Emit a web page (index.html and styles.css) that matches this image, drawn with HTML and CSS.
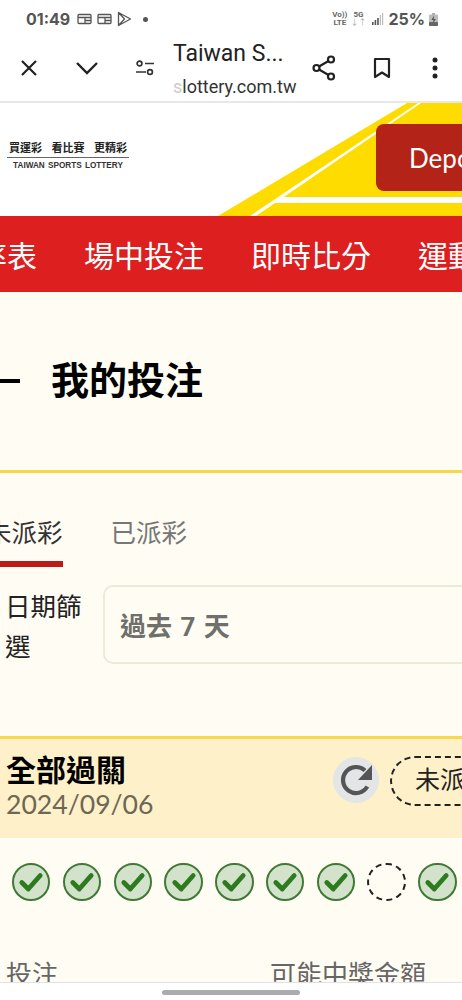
FILE: index.html
```html
<!DOCTYPE html>
<html lang="zh-Hant">

<head>
    <meta charset="UTF-8">
    <meta name="viewport" content="width=device-width, initial-scale=1.0">
    <title>我的投注</title>
    <link rel="stylesheet" href="styles.css">
</head>

<body>
    <div class="phone">
        <!-- Status bar -->
        <div class="status-bar">
            <div class="status-left">
                <span class="clock">01:49</span>
                <svg class="status-icon" width="15" height="12" viewBox="0 0 15 12" fill="none" stroke="#555" stroke-width="1.3"><rect x="1" y="1.5" width="13" height="9" rx="1"/><path d="M1 4.5h13M8 4.5v6M8 7.5h6"/></svg>
                <svg class="status-icon" width="15" height="12" viewBox="0 0 15 12" fill="none" stroke="#555" stroke-width="1.3"><rect x="1" y="1.5" width="13" height="9" rx="1"/><path d="M1 4.5h13M8 4.5v6M8 7.5h6"/></svg>
                <svg class="status-icon" width="15" height="16" viewBox="0 0 15 16" fill="none" stroke="#555" stroke-width="1.3" stroke-linejoin="round"><path d="M1.5 1.5l12 6.5-12 6.5zM1.5 1.5l6 6.5-6 6.5"/></svg>
                <span class="dot"></span>
            </div>
            <div class="status-right">
                <span class="tiny-label">Vo))<br>LTE</span>
                <span class="tiny-label">5G<br><span class="arrows">↓↑</span></span>
                <svg width="12" height="12" viewBox="0 0 12 12" fill="#555"><rect x="0" y="9" width="1.6" height="3"/><rect x="2.6" y="7" width="1.6" height="5"/><rect x="5.2" y="5" width="1.6" height="7"/><rect x="7.8" y="2" width="1.2" height="10" fill="#bbb"/><rect x="10" y="0" width="1.2" height="12" fill="#bbb"/></svg>
                <span class="battery-text">25%</span>
                <svg class="battery" width="9" height="13" viewBox="0 0 9 13"><rect x="3" y="0" width="3" height="2" fill="#aaa"/><rect x="0" y="1.5" width="9" height="11.5" rx="1" fill="#bbb"/><rect x="0" y="9" width="9" height="4" rx="1" fill="#666"/><path d="M5 2.5L2.5 7h2l-.5 3.5L6.8 6H4.8z" fill="#555"/></svg>
            </div>
        </div>

        <!-- Browser toolbar -->
        <div class="toolbar">
            <button class="tool-btn close-btn">
                <svg width="18" height="18" viewBox="0 0 18 18" fill="none" stroke="#222" stroke-width="2.2"><path d="M2 2l14 14M16 2L2 16"/></svg>
            </button>
            <button class="tool-btn chevron-btn">
                <svg width="24" height="14" viewBox="0 0 24 14" fill="none" stroke="#222" stroke-width="2.4"><path d="M2 2l10 10L22 2"/></svg>
            </button>
            <button class="tool-btn tune-btn">
                <svg width="20" height="16" viewBox="0 0 20 16" fill="none" stroke="#333" stroke-width="1.7"><circle cx="4.5" cy="3.5" r="2.4"/><path d="M10 3.5h9M1 12h10"/><circle cx="15" cy="12" r="2.4"/></svg>
            </button>
            <div class="page-info">
                <div class="page-title">Taiwan S...</div>
                <div class="page-url"><span class="url-fade">s</span>lottery.com.tw</div>
            </div>
            <button class="tool-btn share-btn">
                <svg width="24" height="26" viewBox="0 0 24 26" fill="none" stroke="#222" stroke-width="2.2"><circle cx="19" cy="4.5" r="3"/><circle cx="4.5" cy="13" r="3"/><circle cx="19" cy="21.5" r="3"/><path d="M7 11.5l9.5-5.5M7 14.5l9.5 5.5"/></svg>
            </button>
            <button class="tool-btn bookmark-btn">
                <svg width="18" height="22" viewBox="0 0 18 22" fill="none" stroke="#222" stroke-width="2.2" stroke-linejoin="round"><path d="M2 2h14v18l-7-4.5L2 20z"/></svg>
            </button>
            <button class="tool-btn more-btn">
                <svg width="6" height="22" viewBox="0 0 6 22" fill="#222"><circle cx="3" cy="3" r="2.5"/><circle cx="3" cy="11" r="2.5"/><circle cx="3" cy="19" r="2.5"/></svg>
            </button>
        </div>

        <!-- Site header -->
        <header class="site-header">
            <div class="logo">
                <div class="logo-slogan"><span>買運彩</span><span>看比賽</span><span>更精彩</span></div>
                <div class="logo-name">TAIWAN SPORTS LOTTERY</div>
            </div>
            <svg class="header-art" width="252" height="113" viewBox="0 0 252 113">
                <path d="M8 113L197 0H252V113z" fill="#ffdc00"/>
                <path d="M40 113L208 0h3L46 113z" fill="#fff"/>
                <path d="M73 94H252V100H63z" fill="#fff"/>
            </svg>
            <button class="deposit-btn">Deposit</button>
        </header>

        <!-- Red nav -->
        <nav class="main-nav">
            <a>賠率表</a>
            <a>場中投注</a>
            <a>即時比分</a>
            <a>運動賽事</a>
        </nav>

        <main class="content">
            <div class="page-heading">
                <span class="heading-bar"></span>
                <h1>我的投注</h1>
            </div>

            <div class="tabs">
                <a class="tab active">未派彩</a>
                <a class="tab">已派彩</a>
            </div>

            <div class="date-filter">
                <label>日期篩選</label>
                <div class="date-select">過去 7 天</div>
            </div>

            <section class="bet-card">
                <div class="bet-head">
                    <div class="bet-name">
                        <div class="bet-type">全部過關</div>
                        <div class="bet-date">2024/09/06</div>
                    </div>
                    <div class="refresh">
                        <svg width="36" height="36" viewBox="0 0 36 36" fill="none"><path d="M29.3 24.5A13 13 0 1 1 27 8.6" stroke="#555" stroke-width="4.2"/><path d="M34 3v15H20z" fill="#555"/></svg>
                    </div>
                    <div class="status-pill">未派彩</div>
                </div>

                <div class="legs">
                    <span class="leg"><svg width="26" height="22" viewBox="0 0 24 20" fill="none" stroke="#2d7a1f" stroke-width="4.4" stroke-linecap="round" stroke-linejoin="round"><path d="M3.5 10.5l6 6L20.5 4"/></svg></span>
                    <span class="leg"><svg width="26" height="22" viewBox="0 0 24 20" fill="none" stroke="#2d7a1f" stroke-width="4.4" stroke-linecap="round" stroke-linejoin="round"><path d="M3.5 10.5l6 6L20.5 4"/></svg></span>
                    <span class="leg"><svg width="26" height="22" viewBox="0 0 24 20" fill="none" stroke="#2d7a1f" stroke-width="4.4" stroke-linecap="round" stroke-linejoin="round"><path d="M3.5 10.5l6 6L20.5 4"/></svg></span>
                    <span class="leg"><svg width="26" height="22" viewBox="0 0 24 20" fill="none" stroke="#2d7a1f" stroke-width="4.4" stroke-linecap="round" stroke-linejoin="round"><path d="M3.5 10.5l6 6L20.5 4"/></svg></span>
                    <span class="leg"><svg width="26" height="22" viewBox="0 0 24 20" fill="none" stroke="#2d7a1f" stroke-width="4.4" stroke-linecap="round" stroke-linejoin="round"><path d="M3.5 10.5l6 6L20.5 4"/></svg></span>
                    <span class="leg"><svg width="26" height="22" viewBox="0 0 24 20" fill="none" stroke="#2d7a1f" stroke-width="4.4" stroke-linecap="round" stroke-linejoin="round"><path d="M3.5 10.5l6 6L20.5 4"/></svg></span>
                    <span class="leg"><svg width="26" height="22" viewBox="0 0 24 20" fill="none" stroke="#2d7a1f" stroke-width="4.4" stroke-linecap="round" stroke-linejoin="round"><path d="M3.5 10.5l6 6L20.5 4"/></svg></span>
                    <span class="leg pending"></span>
                    <span class="leg"><svg width="26" height="22" viewBox="0 0 24 20" fill="none" stroke="#2d7a1f" stroke-width="4.4" stroke-linecap="round" stroke-linejoin="round"><path d="M3.5 10.5l6 6L20.5 4"/></svg></span>
                </div>

                <div class="bet-foot">
                    <span>投注</span>
                    <span>可能中獎金額</span>
                </div>
            </section>
        </main>

        <!-- Gesture bar -->
        <div class="gesture-bar"><span class="gesture-pill"></span></div>
    </div>
</body>

</html>
```

FILE: styles.css
```css
/* General Reset */
* {
    margin: 0;
    padding: 0;
    box-sizing: border-box;
}

body {
    width: 462px;
    height: 1000px;
    overflow: hidden;
    font-family: 'Roboto', 'Noto Sans CJK TC', sans-serif;
    background: #fff;
}

.phone {
    width: 462px;
    height: 1000px;
    display: flex;
    flex-direction: column;
    overflow: hidden;
}

button {
    background: none;
    border: none;
    display: flex;
    align-items: center;
    justify-content: center;
}

/* Status bar */
.status-bar {
    height: 36px;
    flex: none;
    display: flex;
    justify-content: space-between;
    align-items: center;
    padding: 2px 24px 0 26px;
}

.status-left,
.status-right {
    display: flex;
    align-items: center;
}

.status-left {
    gap: 5px;
}

.clock {
    font-size: 16px;
    font-weight: 700;
    color: #555;
    margin-right: 2px;
    font-family: 'Inter', sans-serif;
}

.dot {
    width: 5px;
    height: 5px;
    border-radius: 50%;
    background: #555;
    margin-left: 6px;
}

.status-right {
    gap: 6px;
}

.tiny-label {
    font-size: 8px;
    line-height: 8px;
    font-weight: 700;
    color: #666;
    text-align: center;
}

.tiny-label + .tiny-label {
    margin-left: -3px;
}

.arrows {
    color: #aaa;
    font-weight: 400;
}

.battery-text {
    font-size: 16px;
    font-weight: 700;
    color: #555;
    font-family: 'Inter', sans-serif;
    margin-left: -2px;
}

.battery {
    margin-left: -2px;
}

/* Toolbar */
.toolbar {
    height: 67px;
    flex: none;
    display: flex;
    align-items: center;
    border-bottom: 2px solid #e8e8e8;
    padding-bottom: 1px;
}

.tool-btn {
    flex: none;
}

.close-btn {
    margin-left: 20px;
}

.chevron-btn {
    margin-left: 37px;
}

.tune-btn {
    margin-left: 36px;
}

.page-info {
    width: 127px;
    margin-left: 18px;
    flex: none;
}

.page-title {
    font-size: 23px;
    line-height: 30px;
    color: #222;
    margin-top: 2px;
}

.page-url {
    font-size: 18px;
    line-height: 26px;
    margin-top: 5px;
    color: #333;
    white-space: nowrap;
}

.url-fade {
    color: #ccc;
}

.share-btn {
    margin-left: 12px;
}

.bookmark-btn {
    margin-left: 37px;
}

.more-btn {
    margin-left: 41px;
}

/* Site header */
.site-header {
    height: 113px;
    flex: none;
    position: relative;
    overflow: hidden;
    background: #fff;
}

.logo {
    width: 122px;
    margin: 37px 0 0 7px;
    text-align: center;
    color: #222;
}

.logo-slogan {
    display: flex;
    justify-content: space-between;
    padding: 0 2px;
    font-size: 11px;
    line-height: 17px;
    font-weight: 700;
    border-bottom: 1px solid #666;
}

.logo-name {
    font-family: 'Liberation Sans', sans-serif;
    font-size: 8.2px;
    line-height: 15px;
    font-weight: 700;
    word-spacing: 1px;
    color: #333;
}

.header-art {
    position: absolute;
    right: 0;
    top: 0;
}

.deposit-btn {
    position: absolute;
    left: 376px;
    top: 21px;
    width: 130px;
    height: 67px;
    background: #b32317;
    border-radius: 8px;
    color: #fff;
    font-family: 'Lato', sans-serif;
    font-size: 26px;
    justify-content: flex-start;
    padding-left: 33px;
}

/* Red nav */
.main-nav {
    height: 76px;
    flex: none;
    background: #dd1f20;
    display: flex;
    align-items: center;
    gap: 47px;
    margin-left: -53px;
    overflow: hidden;
}

.main-nav a {
    flex: none;
    color: #fff;
    font-size: 30px;
}

/* Content */
.content {
    flex: 1;
    min-height: 0;
    background: #fffcf3;
    overflow: hidden;
}

.page-heading {
    height: 181px;
    border-bottom: 3px solid #f7d84a;
    display: flex;
    align-items: center;
    gap: 31px;
}

.heading-bar {
    width: 20px;
    height: 4px;
    background: #000;
}

.page-heading h1 {
    font-size: 38px;
    line-height: 44px;
    font-weight: 700;
    color: #000;
}

.tabs {
    display: flex;
    gap: 48px;
    height: 92px;
    margin-left: -14px;
    padding-top: 42px;
}

.tab {
    font-size: 25.5px;
    line-height: 37px;
    height: 52px;
    color: #777;
}

.tab.active {
    color: #333;
    border-bottom: 6px solid #bd1a1a;
}

.date-filter {
    display: flex;
    align-items: flex-start;
    gap: 20px;
    padding: 20px 0 0 5px;
}

.date-filter label {
    width: 78px;
    flex: none;
    font-size: 25.5px;
    line-height: 40px;
    color: #222;
    padding-top: 2px;
}

.date-select {
    flex: 1;
    height: 79px;
    margin-right: -10px;
    border: 2px solid #eeeadb;
    border-radius: 10px;
    background: #fffcf3;
    font-size: 26px;
    font-weight: 700;
    word-spacing: 2px;
    color: #6f6f6b;
    display: flex;
    align-items: center;
    padding-left: 15px;
}

.bet-card {
    margin-top: 69px;
}

.bet-head {
    height: 102px;
    background: #fef0c8;
    border-top: 3px solid #f7d84a;
    display: flex;
    align-items: flex-start;
    padding: 15px 0 0 6px;
    white-space: nowrap;
}

.bet-name {
    width: 327px;
    flex: none;
}

.bet-type {
    font-size: 30px;
    line-height: 34px;
    font-weight: 700;
    color: #000;
}

.bet-date {
    font-family: 'Lato', sans-serif;
    font-size: 26.6px;
    line-height: 32px;
    color: #6d6755;
}

.refresh {
    width: 46px;
    height: 46px;
    flex: none;
    border-radius: 50%;
    background: #e4e5e6;
    display: flex;
    align-items: center;
    justify-content: center;
    margin-top: 3px;
}

.status-pill {
    flex: none;
    width: 120px;
    height: 50px;
    margin: 2px 0 0 11px;
    border: 2px dashed #222;
    border-radius: 25px;
    font-size: 25px;
    line-height: 46px;
    color: #222;
    padding-left: 23px;
}

.legs {
    display: flex;
    gap: 12.4px;
    padding: 25px 0 0 12px;
    height: 87px;
}

.leg {
    width: 38.4px;
    height: 38.4px;
    flex: none;
    border-radius: 50%;
    border: 2px solid #3f7a35;
    background: #d3e2cb;
    display: flex;
    align-items: center;
    justify-content: center;
}

.leg.pending {
    border: 2px dashed #222;
    background: none;
}

.bet-foot {
    display: flex;
    justify-content: space-between;
    padding: 0 36px 0 6px;
    margin-top: 32px;
    font-size: 26px;
    line-height: 36px;
    color: #666;
}

/* Gesture bar */
.gesture-bar {
    height: 18px;
    flex: none;
    background: #fff;
    border-top: 1px solid #e2e2e2;
    display: flex;
    justify-content: center;
    padding-top: 7px;
}

.gesture-pill {
    width: 138px;
    height: 5px;
    border-radius: 3px;
    background: #aaabaf;
}
```
